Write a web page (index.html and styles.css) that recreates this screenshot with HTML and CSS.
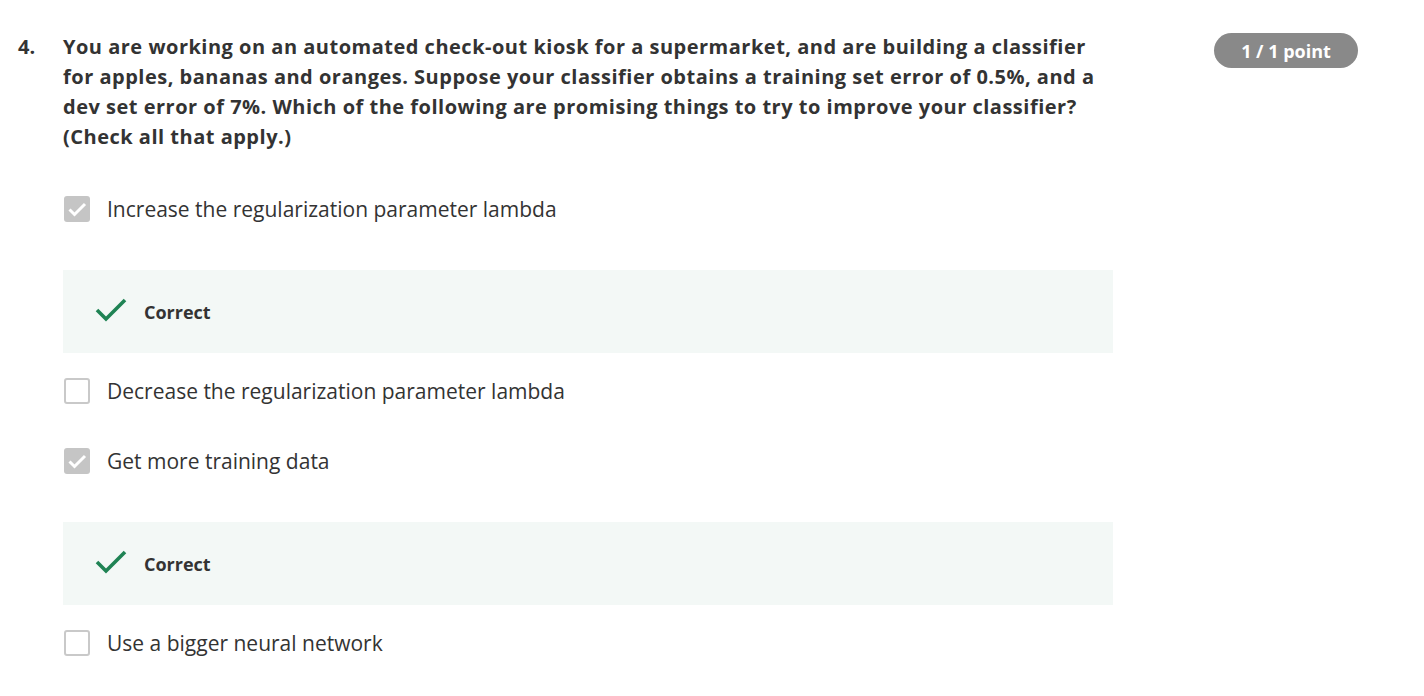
FILE: index.html
```html
<!DOCTYPE html>
<html lang="en">
<head>
<meta charset="utf-8">
<title>Quiz question 4</title>
<link rel="stylesheet" href="styles.css">
</head>
<body>
<div class="question">
  <div class="qnum">4.</div>
  <div class="qbody">
    <p class="prompt">You are working on an automated check-out kiosk for a supermarket, and are building a classifier for apples, bananas and oranges. Suppose your classifier obtains a training set error of 0.5%, and a dev set error of 7%. Which of the following are promising things to try to improve your classifier? (Check all that apply.)</p>
    <div class="options">
      <div class="option has-feedback">
        <div class="row">
          <span class="box checked"><svg viewBox="0 0 26 26" width="26" height="26"><path d="M5.5 13.5 L10.5 18.5 L21 8" fill="none" stroke="#fff" stroke-width="3"/></svg></span>
          <span class="label">Increase the regularization parameter lambda</span>
        </div>
        <div class="feedback">
          <svg class="tick" viewBox="0 0 32 25" width="32" height="25"><path d="M2 13 L11 22 L30 3" fill="none" stroke="#1f8354" stroke-width="3.6"/></svg>
          <span class="fb-text">Correct</span>
        </div>
      </div>
      <div class="option">
        <div class="row">
          <span class="box"></span>
          <span class="label">Decrease the regularization parameter lambda</span>
        </div>
      </div>
      <div class="option has-feedback">
        <div class="row">
          <span class="box checked"><svg viewBox="0 0 26 26" width="26" height="26"><path d="M5.5 13.5 L10.5 18.5 L21 8" fill="none" stroke="#fff" stroke-width="3"/></svg></span>
          <span class="label">Get more training data</span>
        </div>
        <div class="feedback">
          <svg class="tick" viewBox="0 0 32 25" width="32" height="25"><path d="M2 13 L11 22 L30 3" fill="none" stroke="#1f8354" stroke-width="3.6"/></svg>
          <span class="fb-text">Correct</span>
        </div>
      </div>
      <div class="option">
        <div class="row">
          <span class="box"></span>
          <span class="label">Use a bigger neural network</span>
        </div>
      </div>
    </div>
  </div>
  <div class="score"><span class="badge">1 / 1 point</span></div>
</div>
</body>
</html>
```

FILE: styles.css
```css
html, body {
  margin: 0;
  padding: 0;
  background: #fff;
}
body {
  font-family: "Open Sans", "Liberation Sans", sans-serif;
  color: #333;
}
.question {
  display: grid;
  grid-template-columns: 45px 1050px 101px 144px;
  padding: 32px 0 0 18px;
}
.qnum {
  font-size: 20px;
  font-weight: 700;
  line-height: 30px;
  color: #333;
}
.qbody {
  min-width: 0;
}
.prompt {
  margin: 0;
  font-size: 20px;
  font-weight: 700;
  line-height: 30px;
  letter-spacing: 0.5px;
  color: #333;
}
.options {
  margin-top: 42px;
  display: flex;
  flex-direction: column;
}
.option {
  margin-bottom: 40px;
}
.option.has-feedback {
  margin-bottom: 23px;
}
.row {
  display: flex;
  align-items: center;
  gap: 17px;
  padding-left: 1px;
  height: 30px;
}
.box {
  width: 26px;
  height: 26px;
  box-sizing: border-box;
  border: 2px solid #c9c9c9;
  border-radius: 3px;
  background: #fff;
  flex: none;
  display: block;
}
.box.checked {
  border: none;
  background: #c5c5c5;
}
.box svg {
  display: block;
}
.label {
  font-size: 21px;
  line-height: 30px;
  color: #333;
}
.feedback {
  margin-top: 46px;
  height: 83px;
  background: #f3f8f6;
  display: flex;
  align-items: center;
  padding-left: 32px;
  gap: 17px;
}
.tick {
  display: block;
  flex: none;
  margin-top: -4px;
}
.fb-text {
  font-size: 18px;
  font-weight: 700;
  color: #333;
}
.score {
  grid-column: 4;
  padding-top: 1px;
}
.badge {
  display: flex;
  align-items: center;
  justify-content: center;
  height: 35px;
  border-radius: 18px;
  background: #898989;
  color: #fff;
  font-size: 18px;
  font-weight: 700;
}
```
